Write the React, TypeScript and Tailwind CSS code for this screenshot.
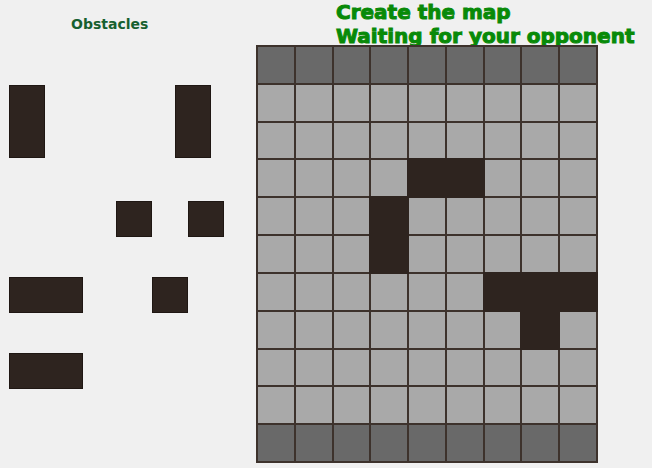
const board = [
  '#########',
  '.........',
  '.........',
  '....oo...',
  '...o.....',
  '...o.....',
  '......ooo',
  '.......o.',
  '.........',
  '.........',
  '#########',
];

const cellColors: Record<string, string> = {
  '#': 'bg-[#696969]',
  '.': 'bg-[#a9a9a9]',
  o: 'bg-[#2e241f] outline-2 outline-[#2e241f]',
};

type Size = 'tall' | 'wide' | 'single';

const sizes: Record<Size, string> = {
  tall: 'w-9 h-[73px]',
  wide: 'w-[74px] h-9',
  single: 'w-9 h-9',
};

function Obstacle({ size }: { size: Size }) {
  return (
    <button
      type="button"
      draggable
      aria-label={`${size} obstacle`}
      className={`block border border-[#1f1713] bg-[#2e241f] ${sizes[size]}`}
    />
  );
}

export default function App() {
  return (
    <main className="flex min-h-screen items-start bg-[#f0f0f0] font-['DejaVu_Sans',sans-serif] font-bold">
      <aside className="w-64 shrink-0 pt-4">
        <h2 className="pl-[71px] text-[14px] leading-4 text-[#16602f]">Obstacles</h2>
        <div className="mt-[53px] flex w-[224px] flex-col gap-10 pl-[9px]">
          <div className="flex h-19 items-start justify-between pr-[13px]">
            <Obstacle size="tall" />
            <Obstacle size="tall" />
          </div>
          <div className="flex justify-end gap-9">
            <Obstacle size="single" />
            <Obstacle size="single" />
          </div>
          <div className="flex justify-between pr-9">
            <Obstacle size="wide" />
            <Obstacle size="single" />
          </div>
          <Obstacle size="wide" />
        </div>
      </aside>
      <section className="min-w-0 flex-1">
        <header className="h-[45px] whitespace-nowrap pl-20 text-[20px] leading-6 text-[#088a08] [-webkit-text-stroke:1px_#088a08]">
          <h1>Create the map</h1>
          <p>Waiting for your opponent</p>
        </header>
        <div className="relative grid aspect-[342/418] w-[342px] max-w-full auto-rows-fr grid-cols-9 gap-0.5 bg-[#3d322c] p-0.5">
          {board.flatMap((row, y) =>
            row.split('').map((cell, x) => <div key={`${y}-${x}`} className={cellColors[cell]} />),
          )}
        </div>
      </section>
    </main>
  );
}
